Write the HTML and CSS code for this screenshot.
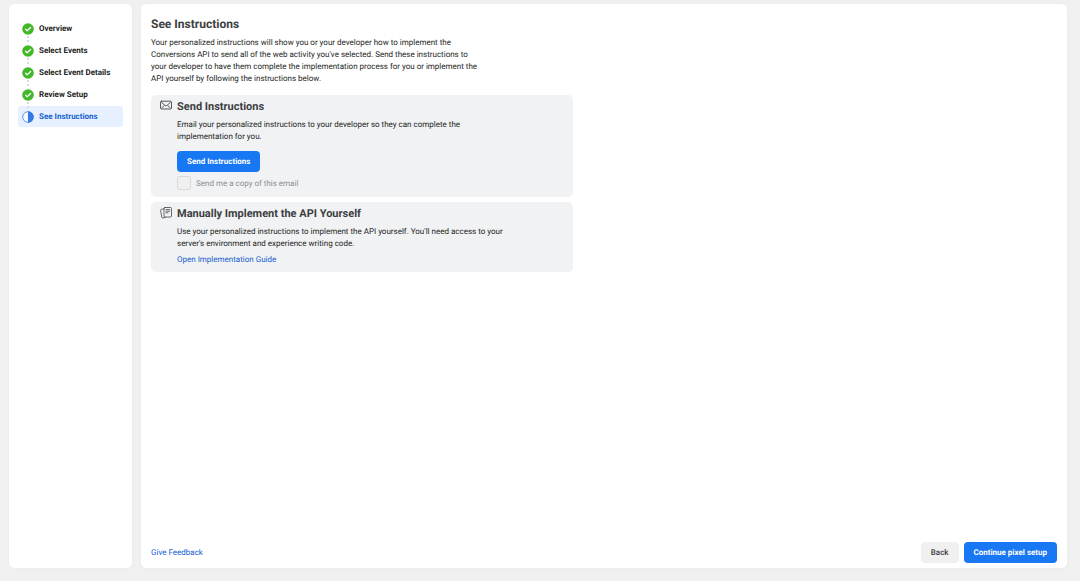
FILE: index.html
```html
<!DOCTYPE html>
<html lang="en">
<head>
<meta charset="utf-8">
<meta name="viewport" content="width=device-width, initial-scale=1">
<title>See Instructions</title>
<link rel="stylesheet" href="styles.css">
</head>
<body>
<svg class="defs" aria-hidden="true">
  <symbol id="check" viewBox="0 0 12 12">
    <circle cx="6" cy="6" r="5.8" fill="#42b72a"/>
    <path d="M3.5 6.2 5.2 7.8 8.6 4.5" fill="none" stroke="#fff" stroke-width="1.2" stroke-linecap="round" stroke-linejoin="round"/>
  </symbol>
</svg>
<div class="page">
  <nav class="sidebar" aria-label="Setup steps">
    <ol class="steps">
      <li class="step"><svg class="step-icon" aria-hidden="true"><use href="#check"/></svg>Overview</li>
      <li class="step"><svg class="step-icon" aria-hidden="true"><use href="#check"/></svg>Select Events</li>
      <li class="step"><svg class="step-icon" aria-hidden="true"><use href="#check"/></svg>Select Event Details</li>
      <li class="step"><svg class="step-icon" aria-hidden="true"><use href="#check"/></svg>Review Setup</li>
      <li class="step step-current" aria-current="step">
        <svg class="step-icon" viewBox="0 0 12 12" aria-hidden="true">
          <circle cx="6" cy="6" r="5.3" fill="#f4f8ff" stroke="#3b7de9" stroke-width=".8"/>
          <path d="M6 .3a5.7 5.7 0 0 1 0 11.4z" fill="#3578e5"/>
        </svg>See Instructions</li>
    </ol>
  </nav>
  <main class="panel">
    <h1 class="title title-page">See Instructions</h1>
    <p class="intro">Your personalized instructions will show you or your developer how to implement the Conversions API to send all of the web activity you've selected. Send these instructions to your developer to have them complete the implementation process for you or implement the API yourself by following the instructions below.</p>
    <section class="card">
      <svg class="card-icon" viewBox="0 0 12 12" fill="none" stroke="#444648" stroke-width=".9" stroke-linejoin="round" stroke-linecap="round" aria-hidden="true">
        <rect x=".5" y="1.2" width="11" height="7.8" rx="1"/>
        <path d="M1.6 2.5 5.2 5.5q.8.6 1.6 0L10.4 2.5M1.8 7.8 4.1 5.8M10.2 7.8 7.9 5.8"/>
      </svg>
      <div class="card-body">
        <h2 class="title">Send Instructions</h2>
        <p class="card-text">Email your personalized instructions to your developer so they can complete the implementation for you.</p>
        <button class="button button-primary send" type="button">Send Instructions</button>
        <div class="copy">
          <input class="copy-box" type="checkbox" id="copy" disabled>
          <label for="copy">Send me a copy of this email</label>
        </div>
      </div>
    </section>
    <section class="card">
      <svg class="card-icon" viewBox="0 0 12 12" fill="none" stroke="#444648" stroke-width=".8" stroke-linejoin="round" stroke-linecap="round" aria-hidden="true">
        <rect x="4" y=".5" width="7.5" height="9.5" rx="1"/>
        <path d="M6 2.6h3.7M6 4.2h3.7M6 5.8h2M4 1.8 1.4 2.3q-.9.2-.8 1.1L1.8 10.3q.2.9 1.1.7L5.2 10.5"/>
      </svg>
      <div class="card-body">
        <h2 class="title">Manually Implement the API Yourself</h2>
        <p class="card-text">Use your personalized instructions to implement the API yourself. You'll need access to your server's environment and experience writing code.</p>
        <a class="link guide" href="#guide">Open Implementation Guide</a>
      </div>
    </section>
    <footer class="footer">
      <a class="link" href="#feedback">Give Feedback</a>
      <div class="actions">
        <button class="button" type="button">Back</button>
        <button class="button button-primary" type="button">Continue pixel setup</button>
      </div>
    </footer>
  </main>
</div>
</body>
</html>
```
FILE: styles.css
```css
* {
  box-sizing: border-box;
}

body {
  margin: 0;
  background: #f0f0f0;
  color: #1c1e21;
  font: 8px/12px Roboto, "Liberation Sans", sans-serif;
  text-rendering: geometricPrecision;
}

h1, h2, p, ol {
  margin: 0;
  padding: 0;
}

.defs {
  display: none;
}

.page {
  display: flex;
  gap: 9px;
  min-height: 100vh;
  padding: 4px 13px 13px 9px;
}

.sidebar,
.panel {
  background: #fff;
  border-radius: 5px;
  box-shadow: 0 0 2px rgba(0, 0, 0, 0.06);
}

.sidebar {
  flex: 0 0 123px;
  padding: 14px 9px;
}

.steps {
  display: grid;
  gap: 1px;
  list-style: none;
}

.step {
  position: relative;
  display: flex;
  align-items: center;
  gap: 5px;
  height: 21px;
  padding-left: 4px;
  border-radius: 3px;
  font-weight: 700;
}

.step-icon {
  flex: none;
  width: 12px;
  height: 12px;
}

/* Dotted connector down to the next step */
.step:not(:last-child)::after {
  content: "";
  position: absolute;
  z-index: 1;
  left: 9px;
  top: 17px;
  width: 2px;
  height: 8px;
  background: radial-gradient(circle, #d8dadd 1px, transparent 1px) 0 0 / 2px 4px;
}

.step-current {
  background: #e7f0ff;
  color: #1561d0;
}

.panel {
  flex: 1;
  display: flex;
  flex-direction: column;
  min-width: 0;
  padding: 14px 10px 5px;
}

.title {
  color: #3c3e41;
  font-size: 11px;
  line-height: 13px;
  font-weight: 700;
}

.title-page {
  font-size: 12px;
}

.intro {
  max-width: 333px;
  margin: 6px 0 10px;
}

.card {
  display: flex;
  gap: 5px;
  width: 100%;
  max-width: 422px;
  margin-bottom: 5px;
  padding: 5px 9px 6px;
  border-radius: 5px;
  background: #f1f2f4;
}

.card-icon {
  flex: none;
  width: 12px;
  height: 12px;
}

.card-text {
  max-width: 340px;
  margin-top: 6px;
}

.button {
  height: 21px;
  padding: 0 10px;
  border: 0;
  border-radius: 4px;
  background: #f0f0f0;
  color: #3c3e41;
  font: 500 8px/12px Roboto, "Liberation Sans", sans-serif;
  text-rendering: inherit;
}

.button-primary {
  background: #1877f2;
  color: #fff;
  font-weight: 700;
}

.send {
  margin-top: 8px;
}

.copy {
  display: flex;
  align-items: flex-end;
  gap: 5px;
  margin-top: 4px;
  padding-bottom: 1px;
  color: #8d8f92;
}

.copy-box {
  appearance: none;
  width: 14px;
  height: 14px;
  margin: 0;
  border: 1px solid #d8d8d8;
  border-radius: 3px;
  background: #f0f0f0;
}

.link {
  color: #1561d0;
  text-decoration: none;
}

.guide {
  display: inline-block;
  margin-top: 4px;
}

.footer {
  display: flex;
  align-items: center;
  justify-content: space-between;
  margin-top: auto;
}

.actions {
  display: flex;
  gap: 5px;
}
```
